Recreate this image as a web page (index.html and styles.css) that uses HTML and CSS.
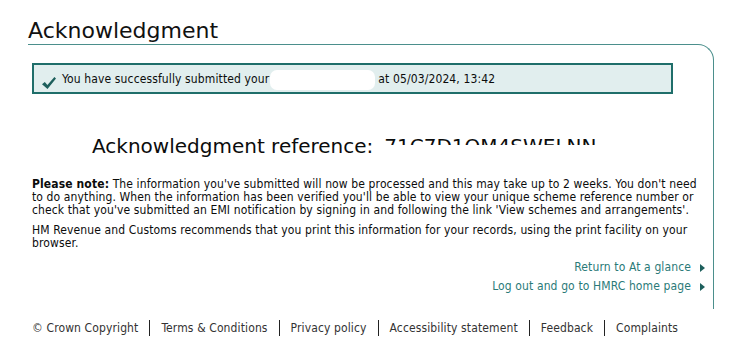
FILE: index.html
```html
<!DOCTYPE html>
<html lang="en">
<head>
    <meta charset="UTF-8">
    <meta name="viewport" content="width=device-width, initial-scale=1.0">
    <title>Acknowledgment</title>
    <link rel="stylesheet" href="styles.css">
</head>
<body>
    <div class="page">
        <h1 class="page-title">Acknowledgment</h1>

        <div class="panel">
            <!-- Confirmation message -->
            <div class="success">
                <svg class="success-icon" width="14" height="12" viewBox="0 0 14 12">
                    <path d="M0 7.2 L2.8 5 L5.4 8 L12.4 0 L14 1.6 L5.5 12 Z" fill="#1d5f5c"/>
                </svg>
                <span>You have successfully submitted your</span>
                <span class="redacted"></span>
                <span>at 05/03/2024, 13:42</span>
            </div>

            <div class="reference">
                <span class="reference-label">Acknowledgment reference:</span>
                <span class="reference-code">71C7D1OM4SWELNN</span>
            </div>

            <p class="note"><strong>Please note:</strong> The information you've submitted will now be processed and this may take up to 2 weeks. You don't need to do anything. When the information has been verified you'll be able to view your unique scheme reference number or check that you've submitted an EMI notification by signing in and following the link 'View schemes and arrangements'.</p>
            <p class="note">HM Revenue and Customs recommends that you print this information for your records, using the print facility on your browser.</p>

            <ul class="links">
                <li><a href="#">Return to At a glance</a></li>
                <li><a href="#">Log out and go to HMRC home page</a></li>
            </ul>
        </div>

        <!-- Footer -->
        <ul class="footer">
            <li>&copy; Crown Copyright</li>
            <li><a href="#">Terms &amp; Conditions</a></li>
            <li><a href="#">Privacy policy</a></li>
            <li><a href="#">Accessibility statement</a></li>
            <li><a href="#">Feedback</a></li>
            <li><a href="#">Complaints</a></li>
        </ul>
    </div>
</body>
</html>
```

FILE: styles.css
```css
body {
    margin: 0;
    padding: 0;
    background-color: #fff;
    color: #0b0c0c;
    font-family: "DejaVu Sans Condensed", "DejaVu Sans", sans-serif;
    font-size: 12px;
    letter-spacing: 0.12px;
}

.page {
    padding: 0 18px 0 28px;
}

.page-title {
    margin: 0;
    padding-top: 17px;
    font-family: "DejaVu Sans", sans-serif;
    font-size: 22px;
    font-weight: normal;
    line-height: 27px;
    letter-spacing: 0;
    color: #111;
}

.panel {
    border-top: 1px solid #4b8f8c;
    border-right: 1px solid #4b8f8c;
    border-top-right-radius: 16px;
    padding: 18px 8px 13px 4px;
}

.success {
    display: flex;
    align-items: center;
    box-sizing: border-box;
    width: 641px;
    height: 31px;
    padding-left: 8px;
    border: 2px solid #1f6e6a;
    background-color: #e1eeee;
    white-space: nowrap;
}

.success-icon {
    align-self: flex-end;
    margin: 0 6px 3px 0;
}

.redacted {
    display: inline-block;
    width: 105px;
    height: 20px;
    margin: 2px 3px 0 1px;
    background-color: #fff;
    border-radius: 7px;
}

.reference {
    display: flex;
    align-items: flex-start;
    margin-top: 40px;
    padding-left: 60px;
    font-family: "DejaVu Sans", sans-serif;
    font-size: 20px;
    line-height: 24px;
    letter-spacing: 0;
}

.reference-code {
    height: 11px;
    margin-left: 11px;
    overflow: hidden;
}

.note {
    margin: 20px 0 0;
    line-height: 13px;
}

.note + .note {
    margin-top: 7px;
}

.links {
    list-style: none;
    margin: 8px 0 0;
    padding: 0;
    text-align: right;
    line-height: 19px;
}

.links a {
    color: #2a7a78;
    text-decoration: none;
}

.links a::after {
    content: "";
    display: inline-block;
    margin-left: 9px;
    border-top: 4px solid transparent;
    border-bottom: 4px solid transparent;
    border-left: 5px solid #1d5f5c;
    vertical-align: -1px;
}

.footer {
    display: flex;
    list-style: none;
    margin: 11px 0 0;
    padding: 0 0 0 4px;
    line-height: 16px;
    color: #333;
}

.footer li + li {
    margin-left: 11px;
    padding-left: 11px;
    border-left: 1px solid #222;
}

.footer a {
    color: #333;
    text-decoration: none;
}
```
